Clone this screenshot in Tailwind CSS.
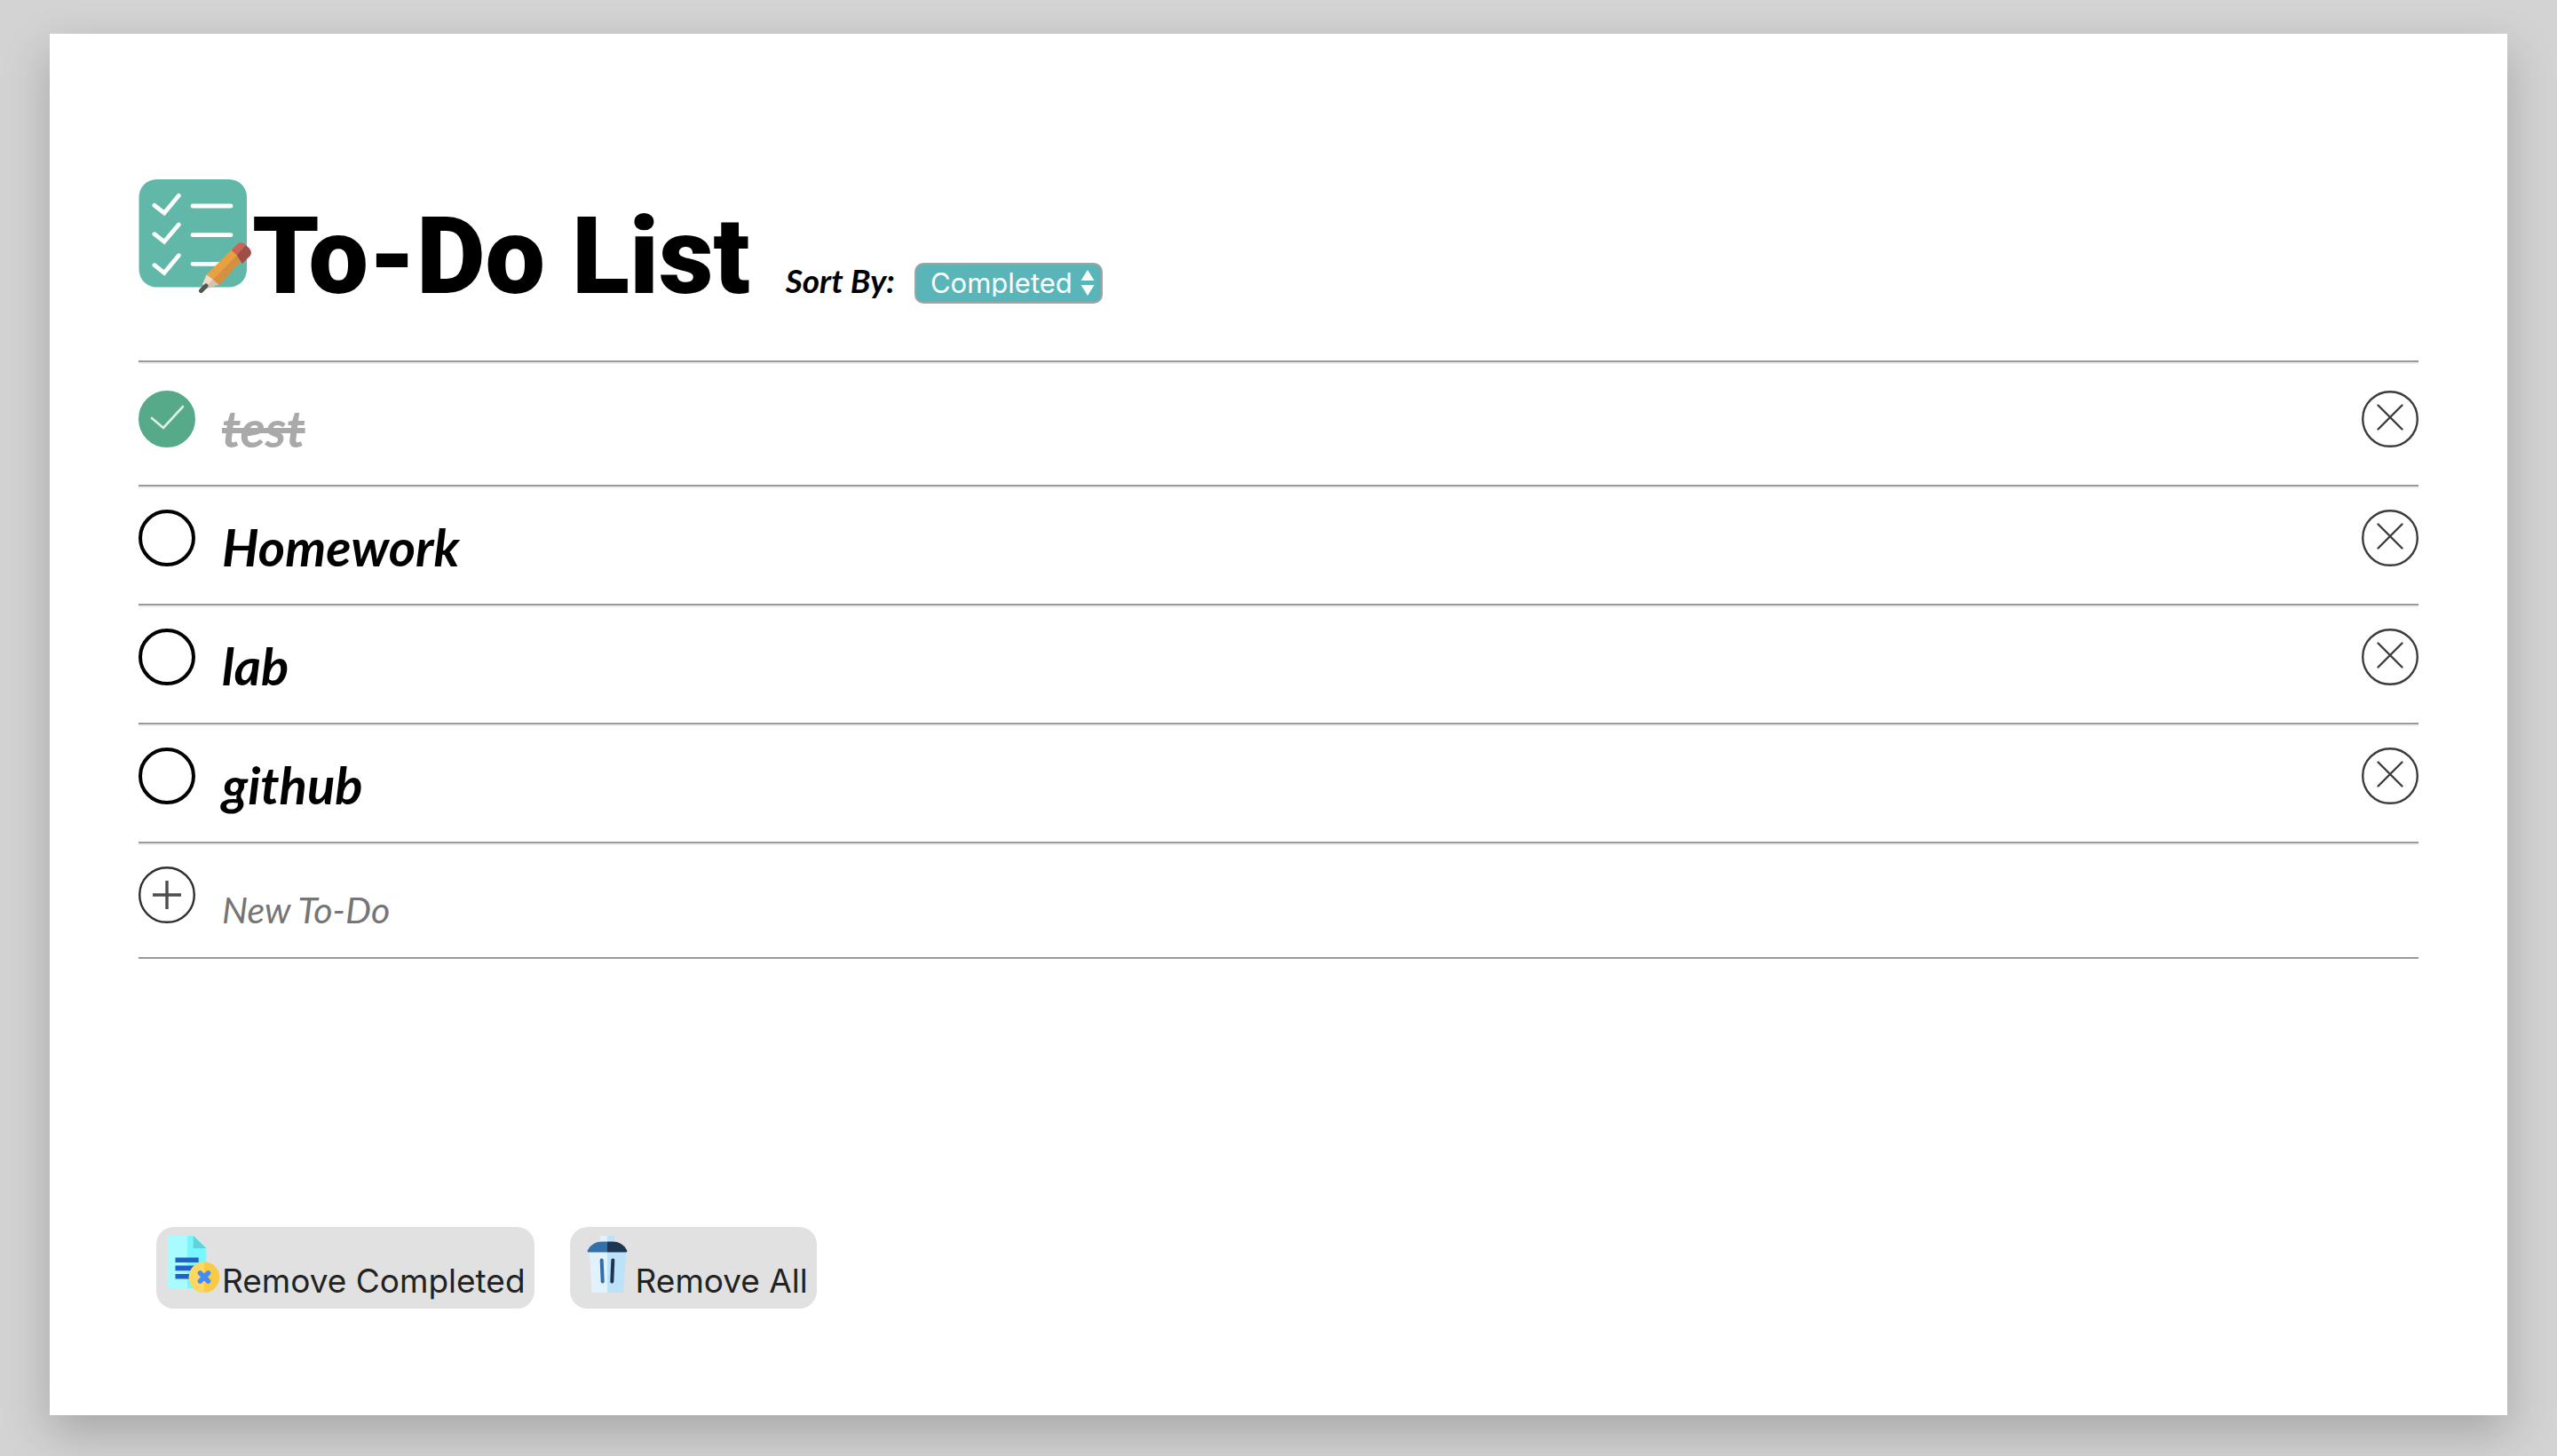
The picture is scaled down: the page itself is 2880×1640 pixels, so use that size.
<!DOCTYPE html>
<html lang="en">
<head>
<meta charset="utf-8">
<title>To-Do List</title>
<script src="https://cdn.jsdelivr.net/npm/@tailwindcss/browser@4"></script>
</head>
<body class="bg-[#d3d3d3] font-[Lato,sans-serif] text-black">
<svg class="hidden" aria-hidden="true">
  <symbol id="tick" viewBox="0 0 64 64"><path d="M15 31 28 42 50 18" fill="none" stroke="#dcf1e8" stroke-width="2.6" stroke-linecap="round"/></symbol>
  <symbol id="cross" viewBox="0 0 64 64"><g fill="none" stroke="#3c3c3c" stroke-width="2.4"><circle cx="32" cy="32" r="30.8"/><path d="M18.5 16.5 45.5 43.5M45.5 16.5 18.5 43.5" stroke-linecap="round"/></g></symbol>
</svg>
<main class="mx-14 mt-[38px] mb-[46px] bg-white px-[100px] pt-[164px] pb-[120px] shadow-[0_20px_50px_rgba(0,0,0,0.21)]">
  <header class="flex items-baseline">
    <h1 class="flex items-baseline font-[Roboto,sans-serif] text-[120px] leading-none font-black whitespace-nowrap">
      <svg class="size-32 shrink-0" viewBox="0 0 128 128" aria-hidden="true">
        <rect x="0.5" width="121.5" height="121.5" rx="20" fill="#61b8a8"/>
        <g fill="none" stroke="#fff" stroke-width="4.8" stroke-linecap="round">
          <path d="M18 29.3 29 38 45.3 18.3M18 61.7 29 70.3 45.3 51M18 96.7 29 105.3 45.3 85.7" />
          <path d="M61 30H104M61 62.7H104M61 95.3H90"/>
        </g>
        <path d="M76.7 107.3 104.7 79.7 116.7 91.3 90.7 118.7Z" fill="#e9a041"/>
        <path d="M84 113 110.7 85.3 116.7 91.3 90.7 118.7Z" fill="#d68f3e"/>
        <path d="M104.7 79.7 111 73.5Q116 69 121 74L110.7 85.3Z" fill="#cc6353"/>
        <path d="M110.7 85.3 121 74 125 78Q129 83 125 87L116.7 95Z" fill="#9e4e47"/>
        <path d="M76.7 107.3 84 113 76 123 72 118Z" fill="#ecdcc8"/>
        <path d="M84 113 90.7 118.7 77 123 75 121Z" fill="#d1c3b1"/>
        <path d="M70.5 125.5 76 120" stroke="#545454" stroke-width="5" stroke-linecap="round"/>
      </svg>
      To-Do List
    </h1>
    <label for="sort" class="ml-10 text-[37px] leading-none font-bold whitespace-nowrap italic">Sort By:</label>
    <div class="relative ml-[22px]">
      <select id="sort" class="h-[46px] w-[212px] appearance-none rounded-[10px] border-2 border-[#a3a3a3] bg-[#5ab5b9] pl-4 font-[Inter,sans-serif] text-[31px] leading-none text-white">
        <option>Completed</option>
        <option>Name</option>
      </select>
      <svg class="pointer-events-none absolute top-2 right-[9px] h-[29px] w-4" viewBox="0 0 16 29" fill="#fff" aria-hidden="true"><path d="M8 0 15.5 12H0.5ZM8 29 15.5 17H0.5Z"/></svg>
    </div>
  </header>

  <ul class="mt-[57px] border-t-2 border-[#9a9a9a] text-[58px] leading-none font-bold italic">
    <li class="flex items-baseline border-t-2 border-b-2 border-t-[#eeeeee] border-b-[#9a9a9a] pt-[30px] pb-[35px]">
      <span class="relative flex size-16 shrink-0">
        <input id="t1" type="checkbox" checked class="size-16 appearance-none rounded-full border-4 border-black checked:border-[#56aa8a] checked:bg-[#56aa8a]">
        <svg class="pointer-events-none absolute inset-0 size-16" aria-hidden="true"><use href="#tick"/></svg>
      </span>
      <label for="t1" class="ml-[30px] text-[#a9a9a9] line-through decoration-[6px]">test</label>
      <button type="button" aria-label="Remove test" class="ml-auto flex size-16"><svg class="size-16"><use href="#cross"/></svg></button>
    </li>
    <li class="flex items-baseline border-t-2 border-b-2 border-t-[#eeeeee] border-b-[#9a9a9a] pt-6 pb-[35px]">
      <span class="relative flex size-16 shrink-0"><input id="t2" type="checkbox" class="size-16 appearance-none rounded-full border-4 border-black"></span>
      <label for="t2" class="ml-[30px]">Homework</label>
      <button type="button" aria-label="Remove Homework" class="ml-auto flex size-16"><svg class="size-16"><use href="#cross"/></svg></button>
    </li>
    <li class="flex items-baseline border-t-2 border-b-2 border-t-[#eeeeee] border-b-[#9a9a9a] pt-6 pb-[35px]">
      <span class="relative flex size-16 shrink-0"><input id="t3" type="checkbox" class="size-16 appearance-none rounded-full border-4 border-black"></span>
      <label for="t3" class="ml-[30px]">lab</label>
      <button type="button" aria-label="Remove lab" class="ml-auto flex size-16"><svg class="size-16"><use href="#cross"/></svg></button>
    </li>
    <li class="flex items-baseline border-t-2 border-b-2 border-t-[#eeeeee] border-b-[#9a9a9a] pt-6 pb-[35px]">
      <span class="relative flex size-16 shrink-0"><input id="t4" type="checkbox" class="size-16 appearance-none rounded-full border-4 border-black"></span>
      <label for="t4" class="ml-[30px]">github</label>
      <button type="button" aria-label="Remove github" class="ml-auto flex size-16"><svg class="size-16"><use href="#cross"/></svg></button>
    </li>
    <li class="flex items-baseline border-t-2 border-b-2 border-t-[#eeeeee] border-b-[#9a9a9a] pt-6 pb-[29px]">
      <button type="button" aria-label="Add to-do" class="flex size-16 shrink-0">
        <svg class="size-16" viewBox="0 0 64 64" fill="none"><circle cx="32" cy="32" r="30.8" stroke="#303030" stroke-width="2.4"/><path d="M16 32H48M32 16V48" stroke="#4d4d4d" stroke-width="3.4"/></svg>
      </button>
      <input type="text" aria-label="New To-Do" placeholder="New To-Do" class="ml-[30px] min-w-0 grow text-[41px] leading-none font-normal italic placeholder:text-[#757575]">
    </li>
  </ul>

  <div class="mt-[302px] ml-5 flex gap-10 font-[Inter,sans-serif] text-[37px] leading-none text-[#222222]">
    <button type="button" class="flex h-[92px] items-baseline rounded-[20px] bg-[#e1e1e1] px-[10px] pt-[10px] whitespace-nowrap">
      <svg class="size-16 shrink-0" viewBox="0 0 64 64" aria-hidden="true">
        <path d="M2.7 0H25V59H2.7Z" fill="#a8fbff"/>
        <path d="M25 0H32L46.3 14V59H25Z" fill="#78f7ff"/>
        <path d="M31.7 0 46.3 14H31.7Z" fill="#5fd3d9"/>
        <path d="M11.5 27.3H37.7M11.5 36.4H34M11.5 45.7H30" stroke="#2360ca" stroke-width="5.6"/>
        <circle cx="44" cy="46.7" r="17.3" fill="#f9ca45"/>
        <path d="M44 29.4A17.3 17.3 0 0 0 44 64Z" fill="#fad862"/>
        <path d="M39.5 42 48.5 51M48.5 42 39.5 51" stroke="#438cf5" stroke-width="5.6" stroke-linecap="round"/>
      </svg>
      Remove Completed
    </button>
    <button type="button" class="flex h-[92px] items-baseline rounded-[20px] bg-[#e1e1e1] px-[10px] pt-[10px] whitespace-nowrap">
      <svg class="size-16 shrink-0" viewBox="0 0 64 64" aria-hidden="true">
        <path d="M24 0H32V8H24Z" fill="#e1f2fc"/><path d="M32 0H40V8H32Z" fill="#bbe2f9"/>
        <path d="M11.7 18H32V64H14.7Z" fill="#e1f2fc"/><path d="M32 18H53.3L49.7 64H32Z" fill="#bbe2f9"/>
        <path d="M32 6.5H26Q15 6.5 10 16Q9 18.5 11 18.5H32Z" fill="#3370ab"/>
        <path d="M32 6.5H38Q49 6.5 54 16Q55 18.5 53 18.5H32Z" fill="#1d3653"/>
        <path d="M25.7 27.5 26.7 51.5" stroke="#3370ab" stroke-width="4" stroke-linecap="round"/>
        <path d="M38.3 27.5 37.3 51.5" stroke="#1d3653" stroke-width="4" stroke-linecap="round"/>
      </svg>
      Remove All
    </button>
  </div>
</main>
</body>
</html>
